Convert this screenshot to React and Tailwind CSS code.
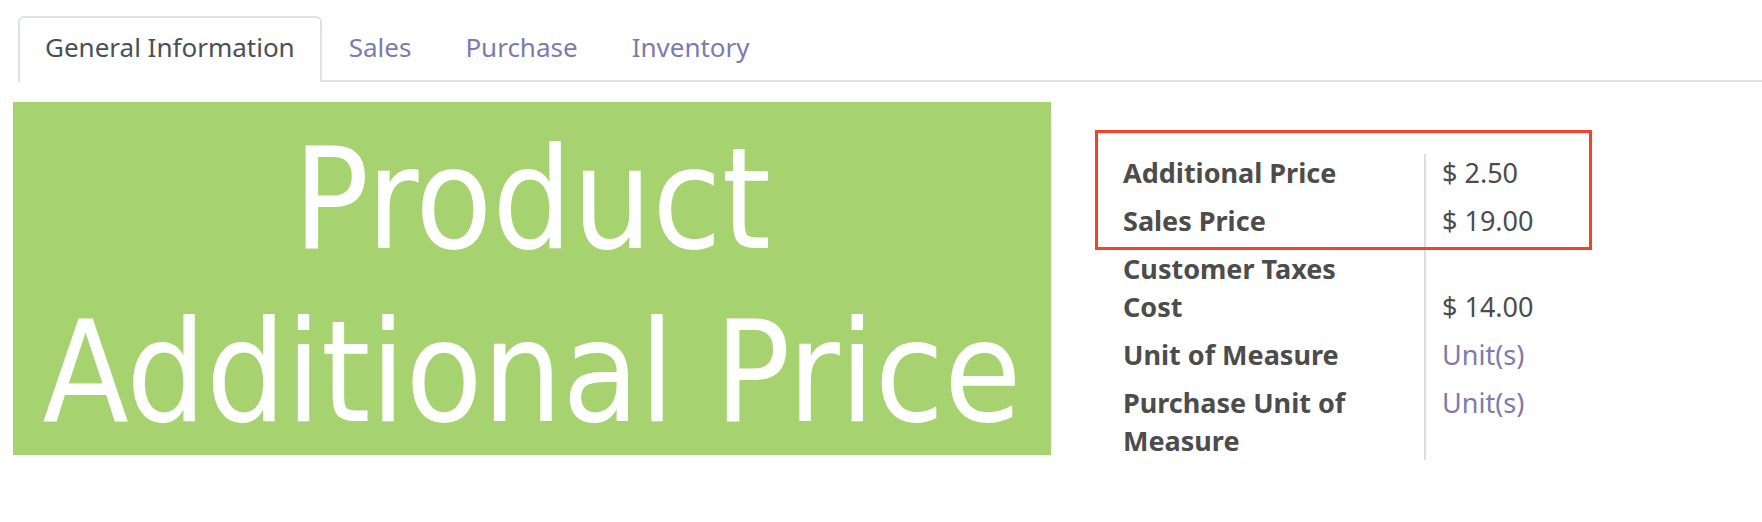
import React, { useState } from "react";

const TABS = ["General Information", "Sales", "Purchase", "Inventory"];

const FIELDS = [
  { label: "Additional Price", value: "$ 2.50" },
  { label: "Sales Price", value: "$ 19.00" },
  { label: "Customer Taxes", value: "", tight: true },
  { label: "Cost", value: "$ 14.00" },
  { label: "Unit of Measure", value: "Unit(s)", link: true },
  { label: "Purchase Unit of Measure", value: "Unit(s)", link: true, tight: true },
];

function Tabs({ active, onSelect }) {
  return (
    <div role="tablist" className="ml-[18px] mt-4 flex border-b-2 border-[#dee2e6]">
      {TABS.map((name) => (
        <button
          key={name}
          type="button"
          role="tab"
          aria-selected={name === active}
          onClick={() => onSelect(name)}
          className={
            name === active
              ? "-mb-0.5 whitespace-nowrap rounded-t-md border-2 border-b-0 border-[#dee2e6] bg-white px-[25px] pb-4 pt-2.5 text-[#495057]"
              : "-mb-0.5 whitespace-nowrap border-2 border-b-0 border-transparent px-[25px] pb-4 pt-2.5 text-[#7c7bad]"
          }
        >
          {name}
        </button>
      ))}
    </div>
  );
}

function Banner() {
  return (
    <div className="h-[353px] bg-[#a6d26f] pt-[11px] text-center font-['DejaVu_Sans_Condensed','DejaVu_Sans',sans-serif] text-[140px] leading-[173px] text-white">
      <div className="whitespace-nowrap">Product</div>
      <div className="whitespace-nowrap">Additional Price</div>
    </div>
  );
}

function Details() {
  return (
    <div className="relative mt-[52px] pl-[72px]">
      <table className="border-collapse text-left text-[27px] text-[#4c4c4c]">
        <tbody>
          {FIELDS.map(({ label, value, link, tight }) => (
            <tr key={label} className="align-top">
              <th
                scope="row"
                className={
                  tight
                    ? "w-[302px] border-r-2 border-[#dddddd] p-0 pr-10 font-bold"
                    : "w-[302px] border-r-2 border-[#dddddd] p-0 pb-2.5 pr-10 font-bold"
                }
              >
                {label}
              </th>
              <td className="whitespace-nowrap p-0 pl-4">
                {link ? (
                  <a href="#unit" className="text-[#7c7bad]">
                    {value}
                  </a>
                ) : (
                  value
                )}
              </td>
            </tr>
          ))}
        </tbody>
      </table>
      <div className="pointer-events-none absolute -top-6 left-11 h-[120px] w-[497px] border-3 border-[#ee4528]" />
    </div>
  );
}

export default function App() {
  const [active, setActive] = useState(TABS[0]);
  return (
    <div className="flow-root bg-white font-['Noto_Sans',sans-serif] text-[26px] leading-[38px]">
      <Tabs active={active} onSelect={setActive} />
      <main className="grid grid-cols-[1038fr_711fr] items-start pl-[13px] pt-5">
        <Banner />
        <Details />
      </main>
    </div>
  );
}
